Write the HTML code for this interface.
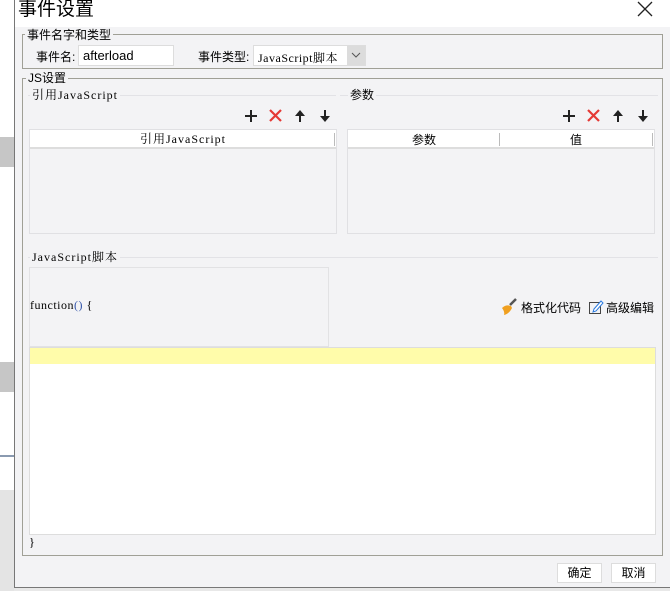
<!DOCTYPE html>
<html><head><meta charset="utf-8"><style>
*{box-sizing:border-box;margin:0;padding:0}
body{width:670px;height:591px;overflow:hidden;background:#e8e8e8;font-family:"Liberation Sans","Noto Sans CJK SC",sans-serif;font-size:12px;color:#000;position:relative}
.a{position:absolute}
.mono{font-family:"Liberation Serif","Noto Serif CJK SC",serif;letter-spacing:1px}
.fs{border:1px solid #a0a096;}
.leg{background:#f3f3f5;padding:0 2px;line-height:14px}
.hl{height:1px;background:#e2e2e6}
</style></head><body>
<div class="a" style="left:0;top:0;width:14px;height:591px;background:#fff"></div>
<div class="a" style="left:0;top:137px;width:14px;height:30px;background:#c6c6c6"></div>
<div class="a" style="left:0;top:362px;width:14px;height:30px;background:#c6c6c6"></div>
<div class="a" style="left:0;top:455px;width:14px;height:2px;background:#8a9ab0"></div>
<div class="a" style="left:0;top:490px;width:14px;height:101px;background:#e4e4e4"></div>
<div class="a" style="left:14px;top:0;width:656px;height:588px;background:#f3f3f5;border-left:1px solid #777;border-bottom:1px solid #777"></div>
<div class="a" style="left:15px;top:0;width:655px;height:27px;background:#fff"></div>
<div class="a" style="left:18px;top:-3px;font-size:19px;line-height:26px">事件设置</div>
<svg class="a" style="left:637px;top:1px" width="16" height="16"><path d="M1 1L15 15M15 1L1 15" stroke="#222" stroke-width="1.3"/></svg>

<div class="a fs" style="left:22px;top:34px;width:641px;height:35px"></div>
<div class="a leg" style="left:25px;top:28px">事件名字和类型</div>
<div class="a" style="left:36px;top:48px">事件名:</div>
<div class="a" style="left:78px;top:45px;width:96px;height:21px;background:#fff;border:1px solid #ddd;padding:2px 4px;font-size:13px">afterload</div>
<div class="a" style="left:198px;top:48px">事件类型:</div>
<div class="a mono" style="left:253px;top:45px;width:113px;height:21px;background:#fff;border:1px solid #ddd;padding:3px 4px;font-size:12px;letter-spacing:0.5px">JavaScript脚本</div>
<div class="a" style="left:347px;top:46px;width:18px;height:19px;background:#dcdcdc"></div>
<svg class="a" style="left:351px;top:52px" width="10" height="7"><path d="M1 1L5 5L9 1" stroke="#555" fill="none"/></svg>

<div class="a fs" style="left:22px;top:78px;width:641px;height:478px"></div>
<div class="a leg" style="left:26px;top:71px">JS设置</div>

<div class="a hl" style="left:28px;top:95px;width:308px"></div>
<div class="a leg mono" style="left:30px;top:88px">引用JavaScript</div>
<div class="a hl" style="left:340px;top:95px;width:318px"></div>
<div class="a leg" style="left:348px;top:88px">参数</div>

<svg class="a" style="left:243px;top:108px" width="92" height="16">
<path d="M2 8H14M8 2V14" stroke="#222" stroke-width="2"/>
<path d="M27 2L38 13M38 2L27 13" stroke="#e53935" stroke-width="2.2"/>
<path d="M57 14V6" stroke="#222" stroke-width="2"/><path d="M52 8L57 2L62 8Z" fill="#222"/>
<path d="M82 2V10" stroke="#222" stroke-width="2"/><path d="M77 8L82 14L87 8Z" fill="#222"/>
</svg>
<svg class="a" style="left:561px;top:108px" width="92" height="16">
<path d="M2 8H14M8 2V14" stroke="#222" stroke-width="2"/>
<path d="M27 2L38 13M38 2L27 13" stroke="#e53935" stroke-width="2.2"/>
<path d="M57 14V6" stroke="#222" stroke-width="2"/><path d="M52 8L57 2L62 8Z" fill="#222"/>
<path d="M82 2V10" stroke="#222" stroke-width="2"/><path d="M77 8L82 14L87 8Z" fill="#222"/>
</svg>

<div class="a" style="left:29px;top:129px;width:308px;height:105px;border:1px solid #e0e0e3"></div>
<div class="a mono" style="left:30px;top:130px;width:306px;height:19px;background:#fff;border-bottom:2px solid #ddd;text-align:center;line-height:18px">引用JavaScript</div>
<div class="a" style="left:334px;top:133px;width:1px;height:13px;background:#bbb"></div>

<div class="a" style="left:347px;top:129px;width:308px;height:105px;border:1px solid #e0e0e3"></div>
<div class="a" style="left:348px;top:130px;width:306px;height:19px;background:#fff;border-bottom:2px solid #ddd"></div>
<div class="a" style="left:348px;top:131px;width:152px;text-align:center;line-height:18px">参数</div>
<div class="a" style="left:500px;top:131px;width:152px;text-align:center;line-height:18px">值</div>
<div class="a" style="left:499px;top:133px;width:1px;height:13px;background:#bbb"></div>
<div class="a" style="left:652px;top:133px;width:1px;height:13px;background:#bbb"></div>

<div class="a hl" style="left:28px;top:257px;width:630px"></div>
<div class="a leg mono" style="left:30px;top:250px">JavaScript脚本</div>
<div class="a" style="left:29px;top:267px;width:300px;height:80px;border:1px solid #e2e2e4"></div>
<div class="a mono" style="left:30px;top:298px;letter-spacing:0.5px">function<span style="color:#3355aa">()</span> {</div>

<svg class="a" style="left:500px;top:298px" width="18" height="18"><path d="M10 7L16 1" stroke="#555" stroke-width="2.5"/><path d="M2 10Q6 6 11 8L12 10Q9 16 4 17Q5 14 2 10Z" fill="#f0a020"/></svg>
<div class="a" style="left:521px;top:299px">格式化代码</div>
<svg class="a" style="left:588px;top:299px" width="16" height="16"><rect x="1.5" y="3.5" width="11" height="11" fill="none" stroke="#444"/><path d="M6 10L13 2L15 4L8 12L5 13Z" fill="#fff" stroke="#2a7ae0"/></svg>
<div class="a" style="left:606px;top:299px">高级编辑</div>

<div class="a" style="left:29px;top:347px;width:627px;height:188px;background:#fff;border:1px solid #ddd"></div>
<div class="a" style="left:30px;top:348px;width:625px;height:16px;background:#fffcaa"></div>
<div class="a mono" style="left:29px;top:535px">}</div>

<div class="a" style="left:557px;top:563px;width:45px;height:20px;background:#fff;border:1px solid #ddd;text-align:center;line-height:18px">确定</div>
<div class="a" style="left:611px;top:563px;width:45px;height:20px;background:#fff;border:1px solid #ddd;text-align:center;line-height:18px">取消</div>
</body></html>
